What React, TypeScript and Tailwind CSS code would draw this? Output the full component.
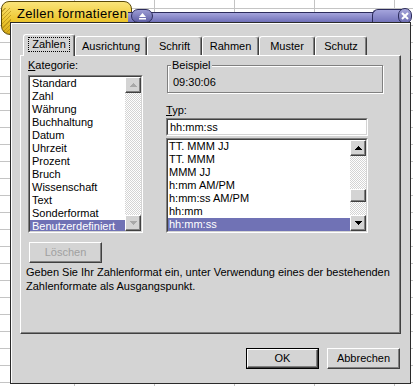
import React from 'react';

const kategorien = [
  'Standard',
  'Zahl',
  'Währung',
  'Buchhaltung',
  'Datum',
  'Uhrzeit',
  'Prozent',
  'Bruch',
  'Wissenschaft',
  'Text',
  'Sonderformat',
  'Benutzerdefiniert',
];

const typen = ['TT. MMM JJ', 'TT. MMM', 'MMM JJ', 'h:mm AM/PM', 'h:mm:ss AM/PM', 'hh:mm', 'hh:mm:ss'];

const tabs = [
  { label: 'Ausrichtung', w: 'w-[72px]' },
  { label: 'Schrift', w: 'w-[55px]' },
  { label: 'Rahmen', w: 'w-[57px]' },
  { label: 'Muster', w: 'w-[56px]' },
  { label: 'Schutz', w: 'w-[52px]' },
];

const Arrow: React.FC<{ up?: boolean; disabled?: boolean }> = ({ up, disabled }) => (
  <div className="w-[16px] h-[16px] shrink-0 bg-[#d4d4d4] border border-t-white border-l-white border-r-[#404040] border-b-[#404040] shadow-[inset_-1px_-1px_0_#808080] flex items-center justify-center">
    <svg width="7" height="4" viewBox="0 0 7 4" shapeRendering="crispEdges">
      <polygon points={up ? '3.5,0 7,4 0,4' : '0,0 7,0 3.5,4'} fill={disabled ? '#a8a8a8' : '#000000'} />
    </svg>
  </div>
);

const Scrollbar: React.FC<{ disabled?: boolean; thumb?: boolean }> = ({ disabled, thumb }) => (
  <div className="w-[16px] h-full flex flex-col shrink-0">
    <Arrow up disabled={disabled} />
    <div className="flex-1 bg-[repeating-conic-gradient(#ffffff_0_25%,#d4d4d4_0_50%)] bg-size-[2px_2px]">
      {thumb && (
        <div className="mt-[33px] h-[13px] bg-[#d4d4d4] border border-t-white border-l-white border-r-[#404040] border-b-[#404040] shadow-[inset_-1px_-1px_0_#808080]" />
      )}
    </div>
    <Arrow disabled={disabled} />
  </div>
);

const Sunken: React.FC<{ className: string; children: React.ReactNode }> = ({ className, children }) => (
  <div className={`${className} border border-t-[#808080] border-l-[#808080] border-r-white border-b-white`}>
    <div className="h-full border border-t-[#404040] border-l-[#404040] border-r-[#d4d4d4] border-b-[#d4d4d4] bg-white flex overflow-hidden">
      {children}
    </div>
  </div>
);

const Button: React.FC<{ children: React.ReactNode; def?: boolean; disabled?: boolean }> = ({ children, def, disabled }) => (
  <div className={`w-[73px] h-[21px] ${def ? 'border border-black' : ''}`}>
    <div className="h-full bg-[#d4d4d4] border border-t-white border-l-white border-r-[#404040] border-b-[#404040] shadow-[inset_-1px_-1px_0_#808080] flex items-center justify-center">
      <span className={disabled ? 'text-[#a0a0a0]' : 'text-black'}>{children}</span>
    </div>
  </div>
);

export default function App() {
  return (
    <div className="relative w-[413px] h-[386px] overflow-hidden bg-white bg-[linear-gradient(to_right,#c4c4c4_1px,transparent_1px),linear-gradient(to_bottom,#c4c4c4_1px,transparent_1px)] bg-size-[80px_17px] bg-position-[74px_8px] font-['Liberation_Sans',Arial,sans-serif] text-[11px] leading-[13px] text-black">
      {/* title tab */}
      <div className="absolute left-px top-px w-[131px] h-[34px] rounded-t-[8px] rounded-bl-[9px] rounded-br-[3px] border border-[#5c4a08] bg-[linear-gradient(to_bottom,#fae47a,#eec832_55%,#d8ac18)] overflow-hidden">
        <div className="absolute left-0 top-[6px] bottom-0 w-[9px] bg-[repeating-linear-gradient(135deg,transparent_0_2px,#a8820e_2px_3px)] opacity-60" />
        <span className="absolute left-[15px] top-[4px] text-[13px] leading-[16px] tracking-[0.3px]">Zellen formatieren</span>
      </div>

      {/* title bar */}
      <div className="absolute left-[128px] top-[12px] w-[250px] h-[11px] border-y border-[#2c2c5c] bg-[linear-gradient(to_bottom,#a4a4dc,#7070b8)]" />
      <div className="absolute left-[372px] top-[9px] w-[30px] h-[14px] rounded-tl-[6px] border-t border-l border-[#2c2c5c] bg-[linear-gradient(to_bottom,#a4a4dc,#7070b8)]" />
      <div className="absolute left-[131px] top-[9px] w-[22px] h-[14px] rounded-full border border-[#2c2c5c] bg-[linear-gradient(to_bottom,#9c9cd4,#5e5ea4)] flex items-center justify-center">
        <svg width="7" height="7" viewBox="0 0 7 7">
          <polygon points="3.5,0 7,4 0,4" fill="#ffffff" />
          <rect x="0" y="5" width="7" height="1.5" fill="#ffffff" />
        </svg>
      </div>
      <div className="absolute left-[398px] top-[8px] w-[14px] h-[16px] rounded-[7px] border border-[#2c2c5c] bg-[linear-gradient(to_bottom,#a8a8dc,#6a6ab0)] flex items-center justify-center">
        <svg width="8" height="8" viewBox="0 0 8 8">
          <path d="M1 1 L7 7 M7 1 L1 7" stroke="#ffffff" strokeWidth="2" />
        </svg>
      </div>

      {/* dialog body */}
      <div className="absolute left-[10px] top-[22px] w-[401px] h-[362px] bg-[#d4d4d4] border border-[#2a2a2a] shadow-[inset_1px_1px_0_#ffffff] pt-[11px] pl-[9px] flex flex-col">
        <div className="flex items-end h-[21px] ml-[3px]">
          <div className="relative z-10 w-[52px] h-[22px] -mb-px bg-[#d4d4d4] rounded-t-[3px] border-t border-l border-r border-t-white border-l-white border-r-[#404040] shadow-[inset_-1px_0_0_#808080] flex items-center justify-center pb-[2px]">
            <span className="border border-dotted border-black px-[3px] leading-[13px]">Zahlen</span>
          </div>
          {tabs.map((t) => (
            <div
              key={t.label}
              className={`${t.w} h-[19px] rounded-t-[3px] border-t border-l border-r border-t-white border-l-white border-r-[#404040] shadow-[inset_-1px_0_0_#808080] flex items-center justify-center`}
            >
              {t.label}
            </div>
          ))}
        </div>

        <div className="w-[381px] h-[279px] border border-t-white border-l-white border-r-[#404040] border-b-[#404040] shadow-[inset_-1px_-1px_0_#808080] pt-[3px] pl-[7px] flex flex-col">
          <div className="flex gap-[23px]">
            <div className="w-[115px] flex flex-col">
              <div className="h-[13px]">
                <span className="underline">K</span>ategorie:
              </div>
              <Sunken className="mt-[3px] h-[158px]">
                <div className="flex-1 min-w-0">
                  {kategorien.map((k) => (
                    <div
                      key={k}
                      className={`h-[13px] pl-[2px] whitespace-nowrap ${k === 'Benutzerdefiniert' ? 'bg-[#7072b5] text-white' : ''}`}
                    >
                      {k}
                    </div>
                  ))}
                </div>
                <Scrollbar disabled />
              </Sunken>
            </div>

            <div className="w-[202px] flex flex-col">
              <div className="relative ml-px mt-[6px] w-[216px] h-[28px] border border-[#808080] shadow-[inset_1px_1px_0_#ffffff,1px_1px_0_#ffffff] pt-[10px] pl-[5px]">
                <span className="absolute -top-[7px] left-[3px] px-px bg-[#d4d4d4]">Beispiel</span>
                09:30:06
              </div>
              <div className="mt-[11px] h-[13px]">
                <span className="underline">T</span>yp:
              </div>
              <Sunken className="mt-px h-[18px]">
                <div className="pl-[2px] leading-[14px]">hh:mm:ss</div>
              </Sunken>
              <Sunken className="mt-[2px] h-[95px]">
                <div className="flex-1 min-w-0">
                  {typen.map((t, i) => (
                    <div
                      key={t}
                      className={`h-[13px] pl-px whitespace-nowrap ${i === typen.length - 1 ? 'bg-[#7072b5] text-white' : ''}`}
                    >
                      {t}
                    </div>
                  ))}
                </div>
                <Scrollbar thumb />
              </Sunken>
            </div>
          </div>

          <div className="mt-[9px] ml-px">
            <Button disabled>Löschen</Button>
          </div>
          <p className="mt-[2px] -ml-[2px] leading-[14px] whitespace-nowrap">
            Geben Sie Ihr Zahlenformat ein, unter Verwendung eines der bestehenden
            <br />
            Zahlenformate als Ausgangspunkt.
          </p>
        </div>

        <div className="mt-[14px] w-[381px] pr-px flex justify-end gap-[8px]">
          <Button def>OK</Button>
          <Button>Abbrechen</Button>
        </div>
      </div>
    </div>
  );
}
